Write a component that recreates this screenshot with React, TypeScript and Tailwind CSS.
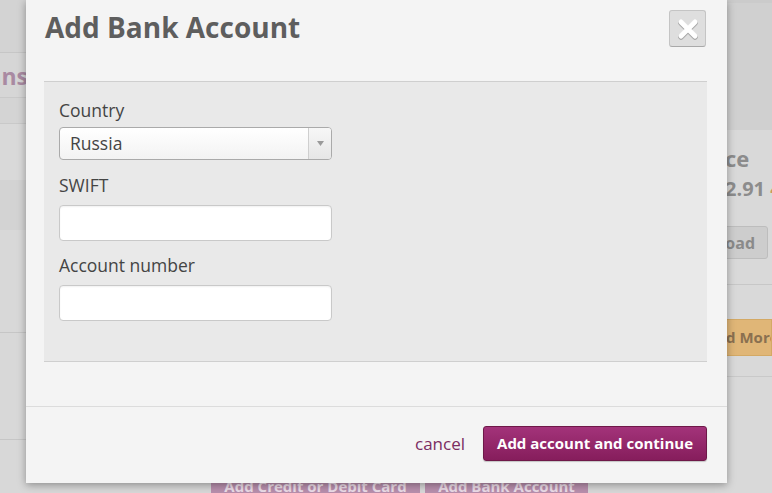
import React from 'react'

const font = { fontFamily: '"Open Sans", "Liberation Sans", sans-serif' }

const Field = ({ label, top, children }: { label: string; top: string; children: React.ReactNode }) => (
  <div className={top}>
    <div className="text-[17.5px] leading-[24px] text-[#444]">{label}</div>
    {children}
  </div>
)

const TextInput = () => (
  <div className="mt-[8px] h-[36px] w-[273px] rounded-[4px] border border-[#c9c9c9] bg-white shadow-[inset_0_1px_2px_rgba(0,0,0,0.06)]" />
)

const Backdrop = () => (
  <div className="flex h-full w-full">
    <div className="flex w-[26px] flex-col bg-[#d6d6d6]">
      <div className="h-[53px] border-b border-[#c6c6c6] bg-[#d3d3d3]" />
      <div className="flex h-[45px] items-center justify-end overflow-hidden border-b border-[#c9c9c9] pt-[2px]">
        <span className="-mr-[2px] whitespace-nowrap text-[23px] font-bold leading-none text-[#a98aa2]">ans</span>
      </div>
      <div className="h-[26px] border-b border-[#c9c9c9] bg-[#d4d4d4]" />
      <div className="h-[56px] bg-[#d9d9d9]" />
      <div className="h-[50px] bg-[#d3d3d3]" />
      <div className="h-[103px] border-b border-[#c6c6c6] bg-[#d8d8d8]" />
      <div className="h-[107px] border-b border-[#c6c6c6] bg-[#d8d8d8]" />
      <div className="flex-1 bg-[#d8d8d8]" />
    </div>
    <div className="flex flex-1 flex-col justify-end bg-[#d8d8d8]">
      <div className="flex h-[18px] gap-[5px] pl-[185px]">
        <div className="flex w-[209px] items-start justify-center overflow-hidden bg-[#b88fad] text-[15px] font-bold leading-[22px] text-[#ecdde8]">
          Add Credit or Debit Card
        </div>
        <div className="flex w-[163px] items-start justify-center overflow-hidden bg-[#b88fad] text-[15px] font-bold leading-[22px] text-[#ecdde8]">
          Add Bank Account
        </div>
      </div>
    </div>
    <div className="flex w-[57px] flex-col overflow-hidden bg-[#d9d9d9]">
      <div className="h-[130px] border-t-[3px] border-[#cbcbcb] bg-[#d0d0d0]" />
      <div className="flex flex-col pl-[10px] pt-[13px]">
        <span className="text-[22px] font-bold leading-[30px] text-[#8c8c8c]">ce</span>
        <span className="mt-[2px] whitespace-nowrap text-[20px] font-bold leading-[28px] text-[#8c8c8c]">
          2.91 <span className="text-[#c89a5a]">4</span>
        </span>
      </div>
      <div className="ml-[-20px] mr-[4px] mt-[23px] flex h-[33px] items-center justify-end rounded-[3px] border border-[#bdbdbd] bg-[#cdcdcd] pr-[12px] text-[16px] font-bold text-[#8a8a8a]">
        Load
      </div>
      <div className="mt-[25px] border-b border-[#c7c7c7]" />
      <div className="mt-[34px] flex h-[37px] items-center overflow-hidden whitespace-nowrap border border-[#d4a964] bg-[#e0b677] text-[15px] font-bold text-[#8a7050]">
        <span className="ml-[1px]">ad More</span>
      </div>
      <div className="mt-[20px] border-b border-[#c9c9c9]" />
    </div>
  </div>
)

export default function App() {
  return (
    <div className="relative h-[493px] w-[772px] overflow-hidden" style={font}>
      <Backdrop />
      <div className="absolute left-[26px] top-0 flex h-[483px] w-[701px] flex-col bg-[#f4f4f4] shadow-[0_2px_8px_rgba(0,0,0,0.35)]">
        <div className="flex items-start justify-between pl-[19px] pr-[21px] pt-[10px]">
          <h1 className="text-[28px] font-bold leading-[34px] text-[#5e5e5e]">Add Bank Account</h1>
          <button className="flex h-[37px] w-[37px] items-center justify-center rounded-[3px] border border-[#c4c4c4] border-b-[#a9a9a9] bg-[#dedede]">
            <svg width="22" height="22" viewBox="0 0 22 22">
              <path d="M4 4 L18 18 M18 4 L4 18" stroke="#a8a8a8" strokeWidth="5.5" strokeLinecap="round" transform="translate(0 1)" />
              <path d="M4 4 L18 18 M18 4 L4 18" stroke="#ffffff" strokeWidth="5" strokeLinecap="round" />
            </svg>
          </button>
        </div>

        <div className="ml-[18px] mr-[20px] mt-[34px] border-b border-t border-[#cfcfcf] bg-[#e9e9e9] pb-[40px] pl-[15px] pt-[16px]">
          <Field label="Country" top="">
            <div className="mt-[5px] flex h-[33px] w-[273px] overflow-hidden rounded-[4px] border border-[#aaaaaa] bg-gradient-to-b from-white to-[#f3f3f3]">
              <div className="flex flex-1 items-center pl-[10px] text-[17.5px] text-[#444]">Russia</div>
              <div className="flex w-[23px] items-center justify-center border-l border-[#cfcfcf] bg-gradient-to-b from-[#f7f7f7] to-[#e6e6e6]">
                <svg width="7" height="5" viewBox="0 0 7 5">
                  <path d="M0 0 H7 L3.5 5 Z" fill="#9a9a9a" />
                </svg>
              </div>
            </div>
          </Field>
          <Field label="SWIFT" top="mt-[13px]">
            <TextInput />
          </Field>
          <Field label="Account number" top="mt-[12px]">
            <TextInput />
          </Field>
        </div>

        <div className="mt-[44px] border-t border-[#dcdcdc] pr-[20px] pt-[19px]">
          <div className="flex items-center justify-end gap-[18px]">
            <a className="text-[17px] leading-[24px] text-[#7b2c62]">cancel</a>
            <button className="h-[35px] rounded-[3px] border border-[#6e1848] bg-gradient-to-b from-[#a3337a] to-[#861d5c] px-[13px] text-[15px] font-bold text-white shadow-[0_1px_1px_rgba(0,0,0,0.2)]">
              Add account and continue
            </button>
          </div>
        </div>
      </div>
    </div>
  )
}
